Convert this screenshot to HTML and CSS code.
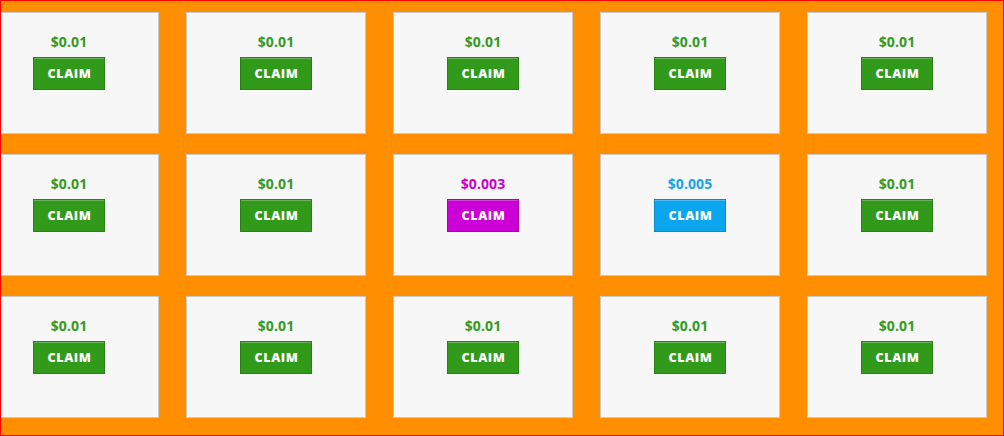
FILE: index.html
```html
<!DOCTYPE html>
<html>
<head>
<meta charset="utf-8">
<link rel="stylesheet" href="styles.css">
</head>
<body>
<div class="frame">
  <div class="grid">
    <div class="card"><div class="price">$0.01</div><button class="claim">CLAIM</button></div>
    <div class="card"><div class="price">$0.01</div><button class="claim">CLAIM</button></div>
    <div class="card"><div class="price">$0.01</div><button class="claim">CLAIM</button></div>
    <div class="card"><div class="price">$0.01</div><button class="claim">CLAIM</button></div>
    <div class="card"><div class="price">$0.01</div><button class="claim">CLAIM</button></div>

    <div class="card"><div class="price">$0.01</div><button class="claim">CLAIM</button></div>
    <div class="card"><div class="price">$0.01</div><button class="claim">CLAIM</button></div>
    <div class="card purple"><div class="price">$0.003</div><button class="claim">CLAIM</button></div>
    <div class="card blue"><div class="price">$0.005</div><button class="claim">CLAIM</button></div>
    <div class="card"><div class="price">$0.01</div><button class="claim">CLAIM</button></div>

    <div class="card"><div class="price">$0.01</div><button class="claim">CLAIM</button></div>
    <div class="card"><div class="price">$0.01</div><button class="claim">CLAIM</button></div>
    <div class="card"><div class="price">$0.01</div><button class="claim">CLAIM</button></div>
    <div class="card"><div class="price">$0.01</div><button class="claim">CLAIM</button></div>
    <div class="card"><div class="price">$0.01</div><button class="claim">CLAIM</button></div>
  </div>
</div>
</body>
</html>
```
FILE: styles.css
```css
* { box-sizing: border-box; }
html, body { margin: 0; padding: 0; }
body {
  width: 1004px;
  height: 436px;
  overflow: hidden;
  font-family: "Open Sans", "DejaVu Sans", sans-serif;
}
.frame {
  width: 1004px;
  height: 436px;
  border: 1px solid #ff0000;
  background: #ff8f00;
  overflow: hidden;
  padding-top: 11px;
}
.grid {
  margin-left: -22px;
  display: grid;
  grid-template-columns: repeat(5, 180px);
  column-gap: 27px;
  row-gap: 20px;
}
.card {
  width: 180px;
  height: 122px;
  background: #f7f7f7;
  border: 1px solid #c9c9c9;
  display: flex;
  flex-direction: column;
  align-items: center;
  padding-top: 21px;
}
.price {
  font-size: 14px;
  font-weight: 700;
  line-height: 16px;
  color: #339a22;
  letter-spacing: 0.1px;
}
.claim {
  margin-top: 7px;
  width: 72px;
  height: 33px;
  padding: 2px 0 0 1px;
  font-family: inherit;
  font-size: 12.5px;
  font-weight: 800;
  color: #ffffff;
  background: #329a1a;
  border: 1px solid #2a8214;
  box-shadow: inset 0 1px 0 rgba(255,255,255,0.25);
  letter-spacing: 0.6px;
  line-height: 1;
}
.purple .price { color: #cc00cc; }
.purple .claim { background: #cc00d6; border-color: #a800b0; }
.blue .price { color: #1aa3e8; }
.blue .claim { background: #0ba6ee; border-color: #0b8cc9; }
```
